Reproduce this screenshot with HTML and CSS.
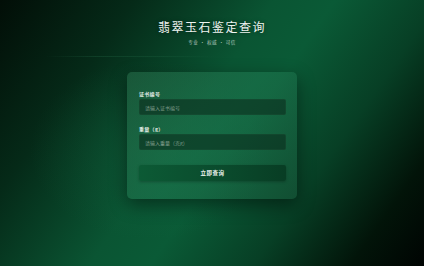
FILE: index.html
```html
<!DOCTYPE html>
<html lang="zh-CN">
<head>
<meta charset="utf-8">
<title>翡翠玉石鉴定查询</title>
<link rel="stylesheet" href="styles.css">
</head>
<body>
<div class="page">
  <header class="hero">
    <h1 class="title">翡翠玉石鉴定查询</h1>
    <p class="subtitle">专业 · 权威 · 可信</p>
  </header>
  <div class="divider"></div>
  <form class="card">
    <label class="field">
      <span class="label">证书编号</span>
      <input class="input" type="text" placeholder="请输入证书编号">
    </label>
    <label class="field">
      <span class="label">重量（g）</span>
      <input class="input" type="text" placeholder="请输入重量（克g）">
    </label>
    <button class="submit" type="button">立即查询</button>
  </form>
</div>
</body>
</html>
```
FILE: styles.css
```css
* { box-sizing: border-box; }
html, body { margin: 0; padding: 0; }
body {
  width: 424px;
  height: 266px;
  overflow: hidden;
  font-family: "Noto Sans CJK SC", "Noto Sans", sans-serif;
  background:
    radial-gradient(ellipse 120px 90px at 150px 150px, rgba(20,110,70,0.3), rgba(20,110,70,0) 100%),
    linear-gradient(125deg, #020e07 0%, #052a18 22%, #0a5533 45%, #0a5a36 55%, #073f25 72%, #021409 88%, #000402 100%);
  color: #e9f1ec;
}
.page {
  height: 266px;
  display: flex;
  flex-direction: column;
  align-items: center;
  padding-top: 18px;
}
.hero { text-align: center; }
.title {
  margin: 0;
  font-size: 12px;
  line-height: 17px;
  font-weight: 400;
  letter-spacing: 1.5px;
  color: #eef4f0;
  text-shadow: 0 0 4px rgba(0,0,0,0.45);
}
.subtitle {
  margin: 4px 0 0;
  font-size: 4.6px;
  line-height: 7px;
  letter-spacing: 0.4px;
  word-spacing: 0.5px;
  color: #b8cfc2;
}
.divider {
  align-self: flex-start;
  margin: 10px 0 0 45px;
  width: 170px;
  height: 1px;
  background: linear-gradient(90deg, rgba(60,140,100,0), rgba(60,150,105,0.18) 30%, rgba(60,150,105,0.12) 70%, rgba(60,140,100,0));
}
.card {
  margin-top: 15px;
  width: 170px;
  height: 127px;
  padding: 17.5px 11px 0 12px;
  border-radius: 5px;
  background: linear-gradient(130deg, rgba(40,110,75,0.55) 0%, rgba(30,120,80,0.55) 50%, rgba(25,90,60,0.55) 100%);
  box-shadow: 0 6px 18px rgba(0,0,0,0.45);
  display: flex;
  flex-direction: column;
}
.field {
  display: flex;
  flex-direction: column;
  gap: 2.5px;
  margin-bottom: 9.5px;
}
.label {
  font-size: 5px;
  line-height: 7px;
  font-weight: 700;
  color: #e3ece6;
  letter-spacing: 0.3px;
}
.input {
  width: 100%;
  height: 16px;
  border: none;
  border-radius: 2px;
  padding: 0 6px;
  font-family: inherit;
  font-size: 5px;
  color: #dfe9e3;
  background: rgba(10, 40, 25, 0.55);
  box-shadow: inset 0 0 0 0.5px rgba(80,150,110,0.15);
  outline: none;
}
.input::placeholder { color: #7f9c8b; }
.submit {
  margin-top: 5px;
  width: 100%;
  height: 16.5px;
  border: none;
  border-radius: 2px;
  font-family: inherit;
  font-size: 5.5px;
  font-weight: 700;
  letter-spacing: 0.5px;
  color: #eef4f0;
  background: linear-gradient(90deg, #0c5a35, #0a4a2c 60%, #083d24);
  box-shadow: 0 1px 3px rgba(0,0,0,0.25);
}
```
